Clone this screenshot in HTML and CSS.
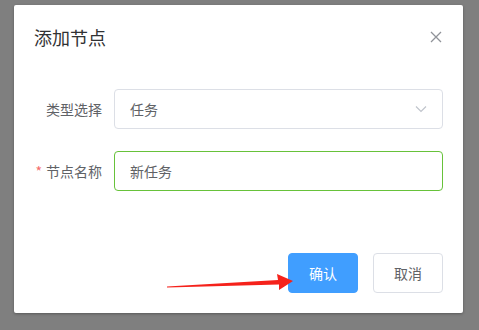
FILE: index.html
```html
<!DOCTYPE html>
<html lang="zh-CN">
<head>
    <meta charset="UTF-8">
    <title>添加节点</title>
    <link rel="stylesheet" href="styles.css">
</head>
<body>
    <div class="dialog">
        <div class="dialog-header">
            <span class="dialog-title">添加节点</span>
            <svg class="dialog-close" width="12" height="12" viewBox="0 0 12 12"><path d="M1 1L11 11M11 1L1 11" stroke="#909399" stroke-width="1.3" fill="none"/></svg>
        </div>
        <div class="dialog-body">
            <div class="form-item">
                <label class="form-label">类型选择</label>
                <div class="input select">
                    <span>任务</span>
                    <svg width="12" height="8" viewBox="0 0 12 8"><path d="M1 1.5L6 6.5L11 1.5" stroke="#c0c4cc" stroke-width="1.2" fill="none"/></svg>
                </div>
            </div>
            <div class="form-item">
                <label class="form-label required">节点名称</label>
                <div class="input focused">
                    <span>新任务</span>
                </div>
            </div>
        </div>
        <div class="dialog-footer">
            <button class="btn btn-primary">确认</button>
            <button class="btn">取消</button>
        </div>
        <svg class="arrow" width="140" height="30" viewBox="0 0 140 30"><path d="M7 22.5 L118 16 L117 10 L133 17 L119 26 L119 20.5 L7 23.5 Z" fill="#f5221b"/></svg>
    </div>
</body>
</html>
```

FILE: styles.css
```css
* {
    margin: 0;
    padding: 0;
    box-sizing: border-box;
}

body {
    font-family: "Noto Sans CJK SC", "Noto Sans", sans-serif;
    background-color: #7f7f7f;
    width: 479px;
    height: 330px;
    overflow: hidden;
}

.dialog {
    position: relative;
    margin: 5px 0 0 14px;
    width: 449px;
    height: 308px;
    background: #fff;
    border-radius: 2px;
    box-shadow: 0 1px 3px rgba(0, 0, 0, 0.3);
}

.dialog-header {
    display: flex;
    justify-content: space-between;
    align-items: center;
    padding: 20px 20px 10px;
}

.dialog-title {
    font-size: 18px;
    line-height: 24px;
    color: #303133;
}

.dialog-close {
    margin-right: 1px;
}

.dialog-body {
    padding: 30px 20px;
}

.form-item {
    display: flex;
    align-items: center;
    margin-bottom: 22px;
}

.form-label {
    width: 80px;
    padding-right: 12px;
    text-align: right;
    font-size: 14px;
    color: #606266;
}

.form-label.required::before {
    content: "*";
    color: #f56c6c;
    margin-right: 4px;
}

.input {
    flex: 1;
    height: 40px;
    display: flex;
    align-items: center;
    justify-content: space-between;
    padding: 0 15px;
    border: 1px solid #dcdfe6;
    border-radius: 4px;
    font-size: 14px;
    color: #606266;
}

.input.focused {
    border-color: #67c23a;
}

.dialog-footer {
    display: flex;
    justify-content: flex-end;
    gap: 15px;
    padding: 10px 20px 20px;
}

.btn {
    width: 70px;
    height: 40px;
    font-family: inherit;
    font-size: 14px;
    color: #606266;
    background: #fff;
    border: 1px solid #dcdfe6;
    border-radius: 4px;
}

.btn-primary {
    color: #fff;
    background: #409eff;
    border-color: #409eff;
}

.arrow {
    position: absolute;
    left: 146px;
    top: 259px;
}
```
